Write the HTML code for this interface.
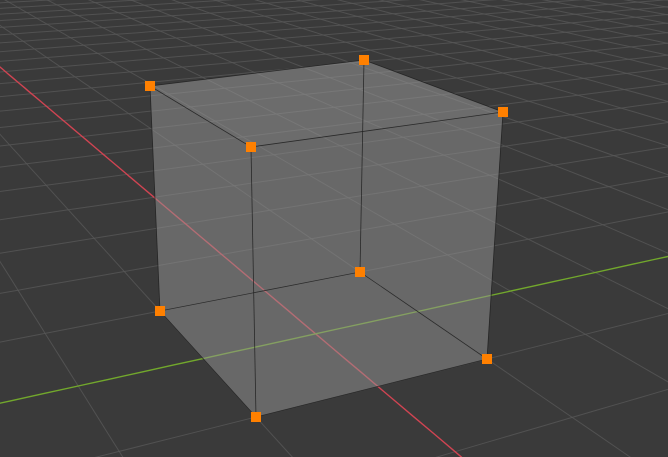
<!DOCTYPE html><html><head><style>html,body{margin:0;padding:0;background:#3a3a3a;overflow:hidden;width:668px;height:457px;position:relative}svg{display:block;position:absolute;left:0;top:0;overflow:hidden}</style></head><body>
<svg id="s" width="668" height="457" viewBox="0 0 668 457" xmlns="http://www.w3.org/2000/svg">
<rect width="668" height="457" fill="#3a3a3a"/>
<g id="grid"></g>
<g id="axes"></g>
<polygon points="150,86 364,60 503,112 487,359 256,417 160,311" fill="rgb(150,150,150)" fill-opacity="0.5"/>
<polygon points="150,86 364,60 503,112 251,147" fill="rgb(160,160,160)" fill-opacity="0.08"/>
<g stroke="#1e1e1e" stroke-width="0.8" fill="none" stroke-opacity="0.85">
<polygon points="150,86 364,60 503,112 251,147"/>
<polygon points="160,311 360,272 487,359 256,417"/>
<line x1="150" y1="86" x2="160" y2="311"/><line x1="364" y1="60" x2="360" y2="272"/>
<line x1="503" y1="112" x2="487" y2="359"/><line x1="251" y1="147" x2="256" y2="417"/>
</g>
<g fill="#ff8000">
<rect x="145" y="81" width="10" height="10"/><rect x="359" y="55" width="10" height="10"/>
<rect x="498" y="107" width="10" height="10"/><rect x="246" y="142" width="10" height="10"/>
<rect x="155" y="306" width="10" height="10"/><rect x="355" y="267" width="10" height="10"/>
<rect x="482" y="354" width="10" height="10"/><rect x="251" y="412" width="10" height="10"/>
</g>
</svg>
<script>
(function(){
var src=[[-1,-1],[1,-1],[1,1],[-1,1]],dst=[[160,311],[256,417],[487,359],[360,272]];
var A=[],b=[];
for(var k=0;k<4;k++){var x=src[k][0],y=src[k][1],u=dst[k][0],v=dst[k][1];
A.push([x,y,1,0,0,0,-u*x,-u*y]);b.push(u);A.push([0,0,0,x,y,1,-v*x,-v*y]);b.push(v);}
var n=8;for(var i=0;i<n;i++){var p=i;for(var r=i+1;r<n;r++)if(Math.abs(A[r][i])>Math.abs(A[p][i]))p=r;
var t=A[i];A[i]=A[p];A[p]=t;t=b[i];b[i]=b[p];b[p]=t;
for(var r=0;r<n;r++)if(r!=i){var f=A[r][i]/A[i][i];for(var c=i;c<n;c++)A[r][c]-=f*A[i][c];b[r]-=f*b[i];}}
var h=[];for(var i=0;i<n;i++)h.push(b[i]/A[i][i]);
function P(x,y){var w=h[6]*x+h[7]*y+1;return [(h[0]*x+h[1]*y+h[2])/w,(h[3]*x+h[4]*y+h[5])/w,w];}
var ns="http://www.w3.org/2000/svg",g=document.getElementById('grid'),ax=document.getElementById('axes');
function line(par,axis,i,col,wd,op){var pts=[];for(var s=-200;s<=200;s+=0.25){var q=axis?P(i,s):P(s,i);if(q[2]>0.02&&q[0]>-300&&q[0]<1000&&q[1]>-300&&q[1]<800)pts.push(q[0].toFixed(1)+','+q[1].toFixed(1));}
if(pts.length<2)return;var e=document.createElementNS(ns,'polyline');e.setAttribute('points',pts.join(' '));e.setAttribute('fill','none');e.setAttribute('stroke',col);e.setAttribute('stroke-width',wd);e.setAttribute('stroke-opacity',op);par.appendChild(e);}
for(var i=-60;i<=60;i++){if(i==0)continue;line(g,0,i,'#575757',1,0.8);line(g,1,i,'#575757',1,0.8);}
line(ax,0,0,'#d04452',1.4,1);line(ax,1,0,'#72a82c',1.4,1);
})();
</script>
</body></html>
